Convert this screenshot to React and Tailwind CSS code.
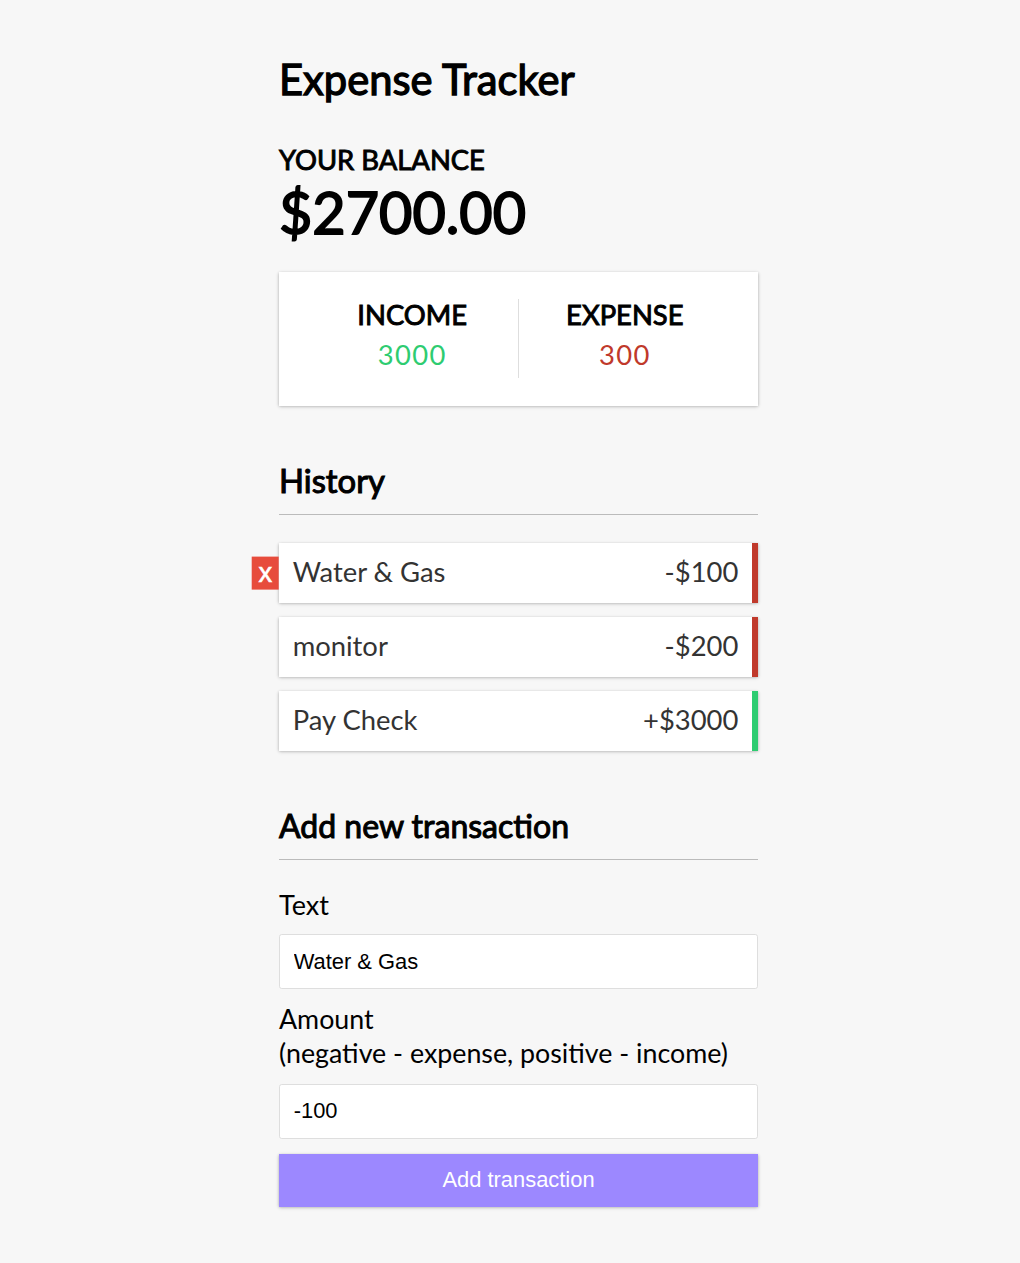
const transactions = [
  { id: 1, text: 'Water & Gas', amount: -100 },
  { id: 2, text: 'monitor', amount: -200 },
  { id: 3, text: 'Pay Check', amount: 3000 },
];

const shadow = 'shadow-[0_1.4px_4px_rgba(0,0,0,0.12),0_1.4px_2.7px_rgba(0,0,0,0.24)]';
// headings use Lato regular thickened by a stroke (the page only loads the 400 weight)
const heading4 = "text-[27.4px] font-normal leading-[1.2] uppercase [-webkit-text-stroke-width:0.95px]";

function TransactionItem({ t, showDelete }) {
  const plus = t.amount > 0;
  return (
    <li
      className={`relative flex justify-between bg-white text-[#333] text-[27.4px] leading-[1.2] p-[13.7px] ${shadow} ${
        plus ? 'border-r-[6px] border-[#2ecc71]' : 'border-r-[6px] border-[#c0392b]'
      }`}
    >
      {t.text}
      <span>
        {plus ? '+' : '-'}${Math.abs(t.amount)}
      </span>
      {showDelete && (
        <button className="absolute left-0 top-1/2 -translate-x-full -translate-y-1/2 bg-[#e74c3c] text-white font-['Liberation_Sans',Arial,sans-serif] text-[27.4px] leading-[27.4px] px-[6.8px] py-[2.7px] [-webkit-text-stroke-width:0.6px]">
          x
        </button>
      )}
    </li>
  );
}

export default function App() {
  return (
    <div className="min-h-screen bg-[#f7f7f7] font-['Lato',sans-serif] text-black pl-[17px]">
      <div className="w-[479px] mx-auto pt-[54px] pb-[40px]">
        <h1 className="text-[41.7px] font-normal leading-[1.2] [-webkit-text-stroke-width:1.3px]">
          Expense Tracker
        </h1>

        <h4 className={`mt-[39.6px] ${heading4}`}>Your Balance</h4>
        <h1 className="text-[57.5px] font-normal leading-[1.2] [-webkit-text-stroke-width:1.8px]">
          $2700.00
        </h1>

        <div className={`mt-[26px] flex bg-white p-[27.4px] ${shadow}`}>
          <div className="flex-1 text-center border-r-[1.4px] border-[#dedede]">
            <h4 className={heading4}>Income</h4>
            <p className="my-[6.85px] text-[27.4px] leading-[1.2] tracking-[1.37px] text-[#2ecc71]">3000</p>
          </div>
          <div className="flex-1 text-center">
            <h4 className={heading4}>Expense</h4>
            <p className="my-[6.85px] text-[27.4px] leading-[1.2] tracking-[1.37px] text-[#c0392b]">300</p>
          </div>
        </div>

        <h3 className="mt-[55.5px] pb-[13.7px] border-b-[1.4px] border-[#bbb] text-[32.8px] font-normal leading-[1.2] [-webkit-text-stroke-width:1.07px]">
          History
        </h3>
        <ul className="mt-[27.4px] flex flex-col gap-[13.7px]">
          {transactions.map((t, i) => (
            <TransactionItem key={t.id} t={t} showDelete={i === 0} />
          ))}
        </ul>

        <h3 className="mt-[55.5px] pb-[13.7px] border-b-[1.4px] border-[#bbb] text-[32px] leading-[39.4px] font-normal [-webkit-text-stroke-width:1.05px]">
          Add new transaction
        </h3>
        <form className="mt-[13.7px]">
          <div>
            <label className="inline-block my-[13.7px] text-[27px] leading-[33px]">Text</label>
            <input
              type="text"
              defaultValue="Water & Gas"
              className="block w-full h-[55px] bg-white border-[1.4px] border-[#dedede] rounded-[2.7px] px-[13.7px] text-[21.9px] text-black font-['Liberation_Sans',Arial,sans-serif] outline-none"
            />
          </div>
          <div>
            <label className="inline-block my-[13.7px] text-[26.8px] leading-[33.5px]">
              Amount <br />
              (negative - expense, positive - income)
            </label>
            <input
              type="text"
              defaultValue="-100"
              className="block w-full h-[55px] bg-white border-[1.4px] border-[#dedede] rounded-[2.7px] px-[13.7px] text-[21.9px] text-black font-['Liberation_Sans',Arial,sans-serif] outline-none"
            />
          </div>
          <button
            type="button"
            className={`block w-full h-[53px] mt-[15.5px] bg-[#9c88ff] text-white text-[21.9px] font-['Liberation_Sans',Arial,sans-serif] ${shadow}`}
          >
            Add transaction
          </button>
        </form>
      </div>
    </div>
  );
}
